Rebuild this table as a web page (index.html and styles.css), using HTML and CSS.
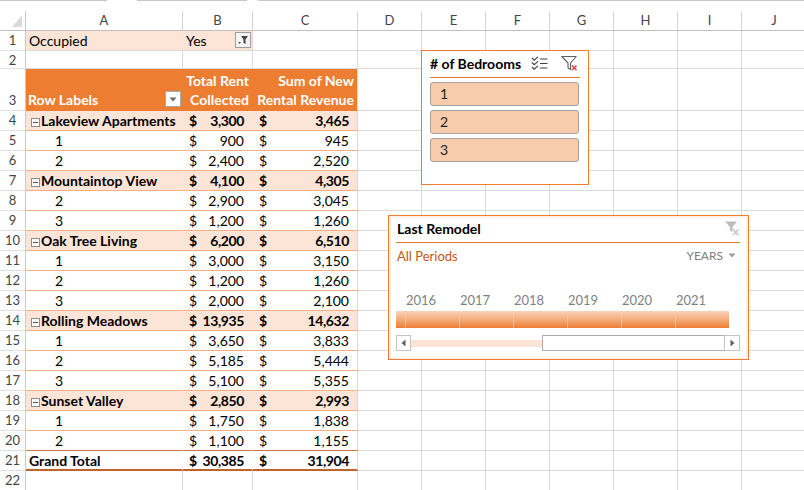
FILE: index.html
```html
<!DOCTYPE html>
<html>
<head>
<meta charset="utf-8">
<link rel="stylesheet" href="styles.css">
</head>
<body>
<div class="sheet">
  <div class="topline"><span class="seg s1"></span><span class="seg s2"></span><span class="seg s3"></span></div>

  <div class="row hdr">
    <div class="rh corner"><span class="tri"></span></div>
    <div class="cell ca">A</div><div class="cell cb">B</div><div class="cell cc">C</div>
    <div class="htail"><span class="hc">D</span><span class="hc">E</span><span class="hc">F</span><span class="hc">G</span><span class="hc">H</span><span class="hc">I</span><span class="hc last">J</span></div>
  </div>

  <div class="row">
    <div class="rh">1</div>
    <div class="cell ca peach noline">Occupied</div>
    <div class="cell cb peach fcell">Yes
      <span class="fbtn"><svg width="14" height="14" viewBox="0 0 14 14"><path d="M2 9 L5 9 L3.5 11 Z" fill="#555"/><path d="M5 3 H12 L9.5 6.5 V11 L7.5 10 V6.5 Z" fill="#444"/></svg></span>
    </div>
    <div class="cell cc"></div><div class="tail"></div>
  </div>

  <div class="row r2">
    <div class="rh">2</div>
    <div class="cell ca"></div><div class="cell cb"></div><div class="cell cc"></div><div class="tail"></div>
  </div>

  <div class="row r3">
    <div class="rh bot">3</div>
    <div class="cell ca ph phl"><span>Row Labels</span><span class="ddbtn"><svg width="8" height="5" viewBox="0 0 8 5"><path d="M0.5 0.5 H7.5 L4 4.5 Z" fill="#6b6b6b"/></svg></span></div>
    <div class="cell cb ph phr"><span>Total Rent</span><span>Collected</span></div>
    <div class="cell cc ph phr"><span>Sum of New</span><span>Rental Revenue</span></div>
    <div class="tail"></div>
  </div>

  <div class="row">
    <div class="rh">4</div>
    <div class="cell ca pv sub"><span class="mbox"></span>Lakeview Apartments</div>
    <div class="cell cb pv sub num"><span>$</span><span>3,300</span></div>
    <div class="cell cc pv sub num"><span>$</span><span>3,465</span></div><div class="tail"></div>
  </div>
  <div class="row">
    <div class="rh">5</div>
    <div class="cell ca pv item">1</div>
    <div class="cell cb pv num"><span>$</span><span>900</span></div>
    <div class="cell cc pv num"><span>$</span><span>945</span></div><div class="tail"></div>
  </div>
  <div class="row">
    <div class="rh">6</div>
    <div class="cell ca pv item">2</div>
    <div class="cell cb pv num"><span>$</span><span>2,400</span></div>
    <div class="cell cc pv num"><span>$</span><span>2,520</span></div><div class="tail"></div>
  </div>
  <div class="row">
    <div class="rh">7</div>
    <div class="cell ca pv sub"><span class="mbox"></span>Mountaintop View</div>
    <div class="cell cb pv sub num"><span>$</span><span>4,100</span></div>
    <div class="cell cc pv sub num"><span>$</span><span>4,305</span></div><div class="tail"></div>
  </div>
  <div class="row">
    <div class="rh">8</div>
    <div class="cell ca pv item">2</div>
    <div class="cell cb pv num"><span>$</span><span>2,900</span></div>
    <div class="cell cc pv num"><span>$</span><span>3,045</span></div><div class="tail"></div>
  </div>
  <div class="row">
    <div class="rh">9</div>
    <div class="cell ca pv item">3</div>
    <div class="cell cb pv num"><span>$</span><span>1,200</span></div>
    <div class="cell cc pv num"><span>$</span><span>1,260</span></div><div class="tail"></div>
  </div>
  <div class="row">
    <div class="rh">10</div>
    <div class="cell ca pv sub"><span class="mbox"></span>Oak Tree Living</div>
    <div class="cell cb pv sub num"><span>$</span><span>6,200</span></div>
    <div class="cell cc pv sub num"><span>$</span><span>6,510</span></div><div class="tail"></div>
  </div>
  <div class="row">
    <div class="rh">11</div>
    <div class="cell ca pv item">1</div>
    <div class="cell cb pv num"><span>$</span><span>3,000</span></div>
    <div class="cell cc pv num"><span>$</span><span>3,150</span></div><div class="tail"></div>
  </div>
  <div class="row">
    <div class="rh">12</div>
    <div class="cell ca pv item">2</div>
    <div class="cell cb pv num"><span>$</span><span>1,200</span></div>
    <div class="cell cc pv num"><span>$</span><span>1,260</span></div><div class="tail"></div>
  </div>
  <div class="row">
    <div class="rh">13</div>
    <div class="cell ca pv item">3</div>
    <div class="cell cb pv num"><span>$</span><span>2,000</span></div>
    <div class="cell cc pv num"><span>$</span><span>2,100</span></div><div class="tail"></div>
  </div>
  <div class="row">
    <div class="rh">14</div>
    <div class="cell ca pv sub"><span class="mbox"></span>Rolling Meadows</div>
    <div class="cell cb pv sub num"><span>$</span><span>13,935</span></div>
    <div class="cell cc pv sub num"><span>$</span><span>14,632</span></div><div class="tail"></div>
  </div>
  <div class="row">
    <div class="rh">15</div>
    <div class="cell ca pv item">1</div>
    <div class="cell cb pv num"><span>$</span><span>3,650</span></div>
    <div class="cell cc pv num"><span>$</span><span>3,833</span></div><div class="tail"></div>
  </div>
  <div class="row">
    <div class="rh">16</div>
    <div class="cell ca pv item">2</div>
    <div class="cell cb pv num"><span>$</span><span>5,185</span></div>
    <div class="cell cc pv num"><span>$</span><span>5,444</span></div><div class="tail"></div>
  </div>
  <div class="row">
    <div class="rh">17</div>
    <div class="cell ca pv item">3</div>
    <div class="cell cb pv num"><span>$</span><span>5,100</span></div>
    <div class="cell cc pv num"><span>$</span><span>5,355</span></div><div class="tail"></div>
  </div>
  <div class="row">
    <div class="rh">18</div>
    <div class="cell ca pv sub"><span class="mbox"></span>Sunset Valley</div>
    <div class="cell cb pv sub num"><span>$</span><span>2,850</span></div>
    <div class="cell cc pv sub num"><span>$</span><span>2,993</span></div><div class="tail"></div>
  </div>
  <div class="row">
    <div class="rh">19</div>
    <div class="cell ca pv item">1</div>
    <div class="cell cb pv num"><span>$</span><span>1,750</span></div>
    <div class="cell cc pv num"><span>$</span><span>1,838</span></div><div class="tail"></div>
  </div>
  <div class="row">
    <div class="rh">20</div>
    <div class="cell ca pv item pre">2</div>
    <div class="cell cb pv num pre"><span>$</span><span>1,100</span></div>
    <div class="cell cc pv num pre"><span>$</span><span>1,155</span></div><div class="tail"></div>
  </div>
  <div class="row">
    <div class="rh">21</div>
    <div class="cell ca pv gt">Grand Total</div>
    <div class="cell cb pv gt num"><span>$</span><span>30,385</span></div>
    <div class="cell cc pv gt num"><span>$</span><span>31,904</span></div><div class="tail"></div>
  </div>
  <div class="row">
    <div class="rh">22</div>
    <div class="cell ca"></div><div class="cell cb"></div><div class="cell cc"></div><div class="tail"></div>
  </div>

  <div class="slicer">
    <div class="sl-head">
      <span class="sl-title"># of Bedrooms</span>
      <svg class="ic-multi" width="17" height="15" viewBox="0 0 17 15">
        <path d="M1 2 L3.2 4.2 L7 0.8 M1 6.5 L3.2 8.7 L7 5.3 M1 11 L3.2 13.2 L7 9.8" stroke="#404040" stroke-width="1.1" fill="none"/>
        <path d="M9 3 H16.5 M9 7.5 H16.5 M9 12 H16.5" stroke="#404040" stroke-width="1.1"/>
      </svg>
      <svg class="ic-clear" width="17" height="17" viewBox="0 0 17 17">
        <path d="M0.8 1.5 H15.2 L9.6 8 V14.5 L7 12.8 V8 Z" stroke="#5e5e5e" stroke-width="1.1" fill="none" stroke-linejoin="round"/>
        <path d="M11 10.5 L15.5 15 M15.5 10.5 L11 15" stroke="#e2474b" stroke-width="1.6"/>
      </svg>
    </div>
    <div class="sl-items">
      <div class="sl-btn">1</div>
      <div class="sl-btn">2</div>
      <div class="sl-btn">3</div>
    </div>
  </div>

  <div class="timeline">
    <div class="tl-head">
      <span class="tl-title">Last Remodel</span>
      <svg width="16" height="17" viewBox="0 0 16 17">
        <path d="M1 1.5 H13 L8.5 7 V12 L6 10.5 V7 Z" fill="#bdbdbd"/>
        <path d="M9 9.5 L14.5 15 M14.5 9.5 L9 15" stroke="#c4c4c4" stroke-width="1.5"/>
      </svg>
    </div>
    <div class="tl-sub">
      <span class="tl-all">All Periods</span>
      <span class="tl-years">YEARS <svg width="8" height="5" viewBox="0 0 8 5"><path d="M0.5 0.5 H7.5 L4 4.5 Z" fill="#9a9a9a"/></svg></span>
    </div>
    <div class="tl-labels"><span>2016</span><span>2017</span><span>2018</span><span>2019</span><span>2020</span><span>2021</span></div>
    <div class="tl-bar"><span class="b0"></span><span class="bs"></span><span class="bs"></span><span class="bs"></span><span class="bs"></span><span class="bs"></span><span class="bs"></span></div>
    <div class="tl-scroll">
      <span class="sbtn"><svg width="5" height="8" viewBox="0 0 5 8"><path d="M4.5 0.5 V7.5 L0.5 4 Z" fill="#606060"/></svg></span>
      <span class="sband"></span>
      <span class="sthumb"></span>
      <span class="sbtn"><svg width="5" height="8" viewBox="0 0 5 8"><path d="M0.5 0.5 V7.5 L4.5 4 Z" fill="#606060"/></svg></span>
    </div>
  </div>
</div>
</body>
</html>
```

FILE: styles.css
```css
* { box-sizing: border-box; }
body {
  margin: 0;
  background: #fff;
  font-family: Lato, "Liberation Sans", sans-serif;
  font-size: 14px;
  color: #000;
}
.sheet {
  position: relative;
  width: 804px;
  height: 490px;
  overflow: hidden;
}
.topline {
  height: 11px;
  display: flex;
  align-items: flex-start;
}
.seg { height: 1px; background: #c6c6c6; }
.s1 { width: 107px; margin-right: 30px; }
.s2 { width: 110px; margin-right: 11px; }
.s3 { flex: 1; }

.row { display: flex; height: 20px; }
.r2 { height: 18px; }
.r3 { height: 42px; }

.rh {
  width: 26px;
  flex: none;
  border-right: 1px solid #c8c8c8;
  border-bottom: 1px solid #e0e0e0;
  color: #444;
  font-size: 13px;
  text-align: center;
  line-height: 19px;
}
.rh.bot { display: flex; align-items: flex-end; justify-content: center; }
.corner { position: relative; border-bottom-color: #c0c0c0; }
.tri {
  position: absolute;
  right: 3px;
  bottom: 3px;
  width: 0; height: 0;
  border-left: 10px solid transparent;
  border-bottom: 12px solid #dadada;
}

.cell {
  flex: none;
  border-right: 1px solid #dadada;
  border-bottom: 1px solid #dadada;
  line-height: 19px;
  padding: 0 3px;
  white-space: nowrap;
  overflow: hidden;
}
.ca { width: 157px; }
.cb { width: 70px; }
.cc { width: 105px; }
.tail {
  flex: 1;
  border-bottom: 1px solid #dadada;
  background: repeating-linear-gradient(to right, transparent 0 63px, #dadada 63px 64px);
}

.hdr .cell {
  text-align: center;
  color: #444;
  font-size: 13px;
  border-bottom-color: #c0c0c0;
  border-right-color: #d4d4d4;
}
.htail { flex: 1; display: flex; border-bottom: 1px solid #c0c0c0; }
.hc {
  width: 64px;
  flex: none;
  text-align: center;
  color: #444;
  font-size: 13px;
  line-height: 19px;
  border-right: 1px solid #d4d4d4;
}
.hc.last { flex: 1; border-right: none; }

.peach { background: #fce4d6; }
.noline { border-right-color: transparent; }
.fcell { position: relative; }
.fbtn {
  position: absolute;
  right: 1px;
  top: 1px;
  width: 16px;
  height: 16px;
  border: 1px solid #9e9e9e;
  background: #f4f4f4;
  display: flex;
  align-items: center;
  justify-content: center;
}

.ph {
  background: #ed7d31;
  color: #fff;
  font-weight: bold;
  border-bottom-color: transparent;
  display: flex;
  flex-direction: column;
  justify-content: flex-end;
  line-height: 19px;
  padding-bottom: 1px;
}
.ca.ph, .cb.ph { border-right-color: transparent; }
.phl { flex-direction: row; align-items: flex-end; justify-content: space-between; padding-left: 2px; padding-right: 1px; }
.phr { align-items: flex-end; padding-right: 3px; }
.ddbtn {
  width: 16px;
  height: 16px;
  margin-bottom: 2px;
  border: 1px solid #a9a9a9;
  background: #fff;
  display: flex;
  align-items: center;
  justify-content: center;
}

.pv { border-bottom-color: #f4b084; }
.ca.pv, .cb.pv { border-right-color: transparent; }
.sub { background: #fce4d6; font-weight: bold; }
.item { padding-left: 29px; }
.mbox {
  display: inline-block;
  width: 9px;
  height: 9px;
  border: 1px solid #8c8c8c;
  background: #fff;
  margin: 0 1px 0 2px;
  position: relative;
  vertical-align: -1px;
}
.mbox::after {
  content: "";
  position: absolute;
  left: 1px;
  right: 1px;
  top: 3px;
  height: 1px;
  background: #555;
}
.num {
  display: flex;
  justify-content: space-between;
  padding: 0 8px 0 6px;
}
.sub.num span + span, .gt.num span + span { letter-spacing: -0.4px; }
.pre { border-bottom-color: #c87541; }
.gt {
  font-weight: bold;
  border-bottom: 2px solid #c0642b;
}

/* Slicer */
.slicer {
  position: absolute;
  left: 421px;
  top: 50px;
  width: 168px;
  height: 135px;
  background: #fff;
  border: 1px solid #ed7d31;
  padding: 0 8px;
}
.sl-head {
  height: 27px;
  display: flex;
  align-items: center;
  border-bottom: 1px solid #ed7d31;
  padding-bottom: 1px;
}
.sl-title { flex: 1; font-weight: bold; font-size: 14px; color: #000; }
.ic-multi { margin-right: 13px; }
.ic-clear { margin-right: 2px; }
.sl-items {
  display: flex;
  flex-direction: column;
  gap: 4px;
  margin-top: 4px;
}
.sl-btn {
  width: 149px;
  height: 24px;
  background: #f8cbad;
  border: 1px solid #a0a0a0;
  border-radius: 3px;
  padding-left: 9px;
  line-height: 22px;
  font-size: 14px;
  color: #1f1f1f;
}

/* Timeline */
.timeline {
  position: absolute;
  left: 388px;
  top: 215px;
  width: 361px;
  height: 145px;
  background: #fff;
  border: 1px solid #ed7d31;
  box-shadow: inset 0 0 0 2px #fdf1e9;
  padding: 0 8px 0 7px;
}
.tl-head {
  height: 27px;
  display: flex;
  align-items: center;
  justify-content: space-between;
  border-bottom: 1px solid #ed7d31;
  padding-bottom: 2px;
}
.tl-title { font-weight: bold; font-size: 14px; color: #000; margin-left: 1px; }
.tl-sub {
  height: 25px;
  display: flex;
  align-items: center;
  justify-content: space-between;
}
.tl-all { color: #c65911; font-size: 13px; margin-left: 1px; }
.tl-years { color: #7f7f7f; font-size: 12px; display: flex; align-items: center; gap: 5px; margin-right: 4px; }
.tl-labels {
  margin-top: 24px;
  height: 16px;
  display: flex;
  padding-left: 10px;
}
.tl-labels span {
  width: 54px;
  color: #7f7f7f;
  font-size: 13px;
  line-height: 16px;
}
.tl-bar {
  margin-top: 3px;
  height: 17px;
  width: 333px;
  display: flex;
  background: linear-gradient(#f9d2b8, #f3a875 55%, #ed7d31);
}
.tl-bar .b0 { width: 9px; }
.tl-bar .bs { width: 54px; border-left: 1px solid rgba(250, 200, 165, 0.7); }
.tl-scroll {
  margin-top: 7px;
  height: 16px;
  display: flex;
  align-items: center;
}
.sbtn {
  width: 15px;
  height: 16px;
  border: 1px solid #c3c3c3;
  background: #fff;
  display: flex;
  align-items: center;
  justify-content: center;
  flex: none;
}
.sbtn:last-child { width: 16px; }
.sband {
  width: 131px;
  height: 7px;
  background: #fbe4d5;
  flex: none;
}
.sthumb {
  flex: 1;
  height: 16px;
  border: 1px solid #adadad;
  border-right: none;
  background: #fff;
}
```
